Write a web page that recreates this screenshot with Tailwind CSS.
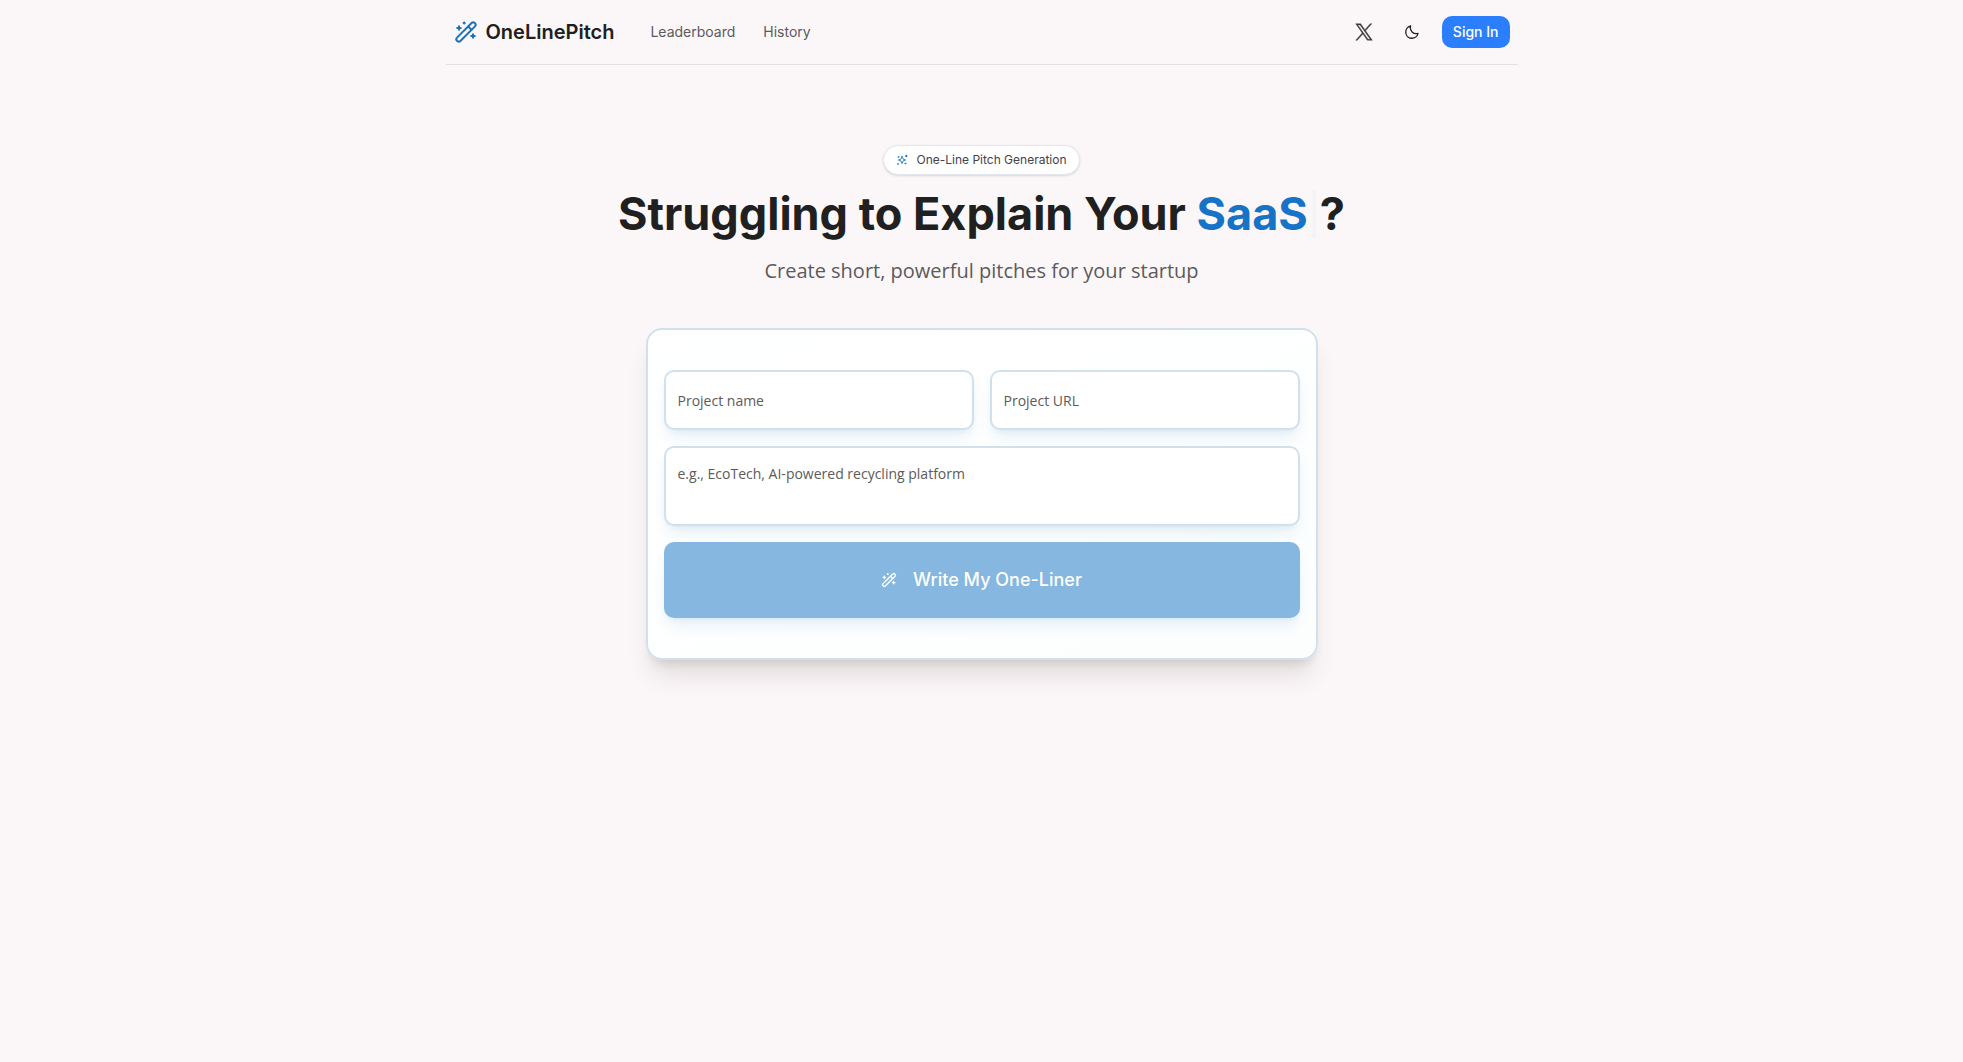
<!DOCTYPE html>
<html lang="en">
<head>
<meta charset="utf-8">
<meta name="viewport" content="width=device-width, initial-scale=1">
<title>OneLinePitch</title>
<script src="https://cdn.jsdelivr.net/npm/@tailwindcss/browser@4"></script>
</head>
<body class="min-h-screen bg-[#fbf7f8] font-['Inter',sans-serif] text-[#202020]">
<svg class="hidden" aria-hidden="true">
  <symbol id="wand" viewBox="0 0 24 24" fill="none" stroke="currentColor" stroke-linecap="round" stroke-linejoin="round">
    <rect x="-0.5" y="9.600" width="25" height="4.800" rx="2.200" transform="rotate(-45 12 12)"/>
    <path d="M14.200 6.500l3.300 3.300M5 6.200v3.600M3.200 8h3.600M19 14.200v3.600M17.200 16h3.600M10.200 2.400v1.200M9.600 3h1.200"/>
  </symbol>
</svg>
<header class="mx-auto flex h-[65px] max-w-[1072px] items-center justify-between border-b border-[#e4e1e3] px-2">
  <div class="flex items-center gap-9">
    <a href="#" class="flex items-center gap-2 text-xl font-semibold">
      <svg class="size-6 text-[#1874bd]" stroke-width="2" aria-hidden="true"><use href="#wand"/></svg>
      OneLinePitch
    </a>
    <nav class="flex gap-7 text-sm text-[#5c5a5c]">
      <a href="#">Leaderboard</a>
      <a href="#">History</a>
    </nav>
  </div>
  <div class="flex items-center gap-3">
    <a href="#" aria-label="X" class="flex size-9 items-center justify-center text-[#3c3c3c]">
      <svg class="size-[18px]" viewBox="0 0 24 24" fill="currentColor" stroke="currentColor" stroke-width=".6" aria-hidden="true"><path d="M14.100 10.300 22.300 1h-2l-7.100 8.100L7.600 1H1l8.600 12.300L1 23h2l7.500-8.500 6 8.500H23.100zm-2.700 3-.9-1.200L3.700 2.500h3l5.500 7.800.9 1.200 7.200 10.100h-3z"/></svg>
    </a>
    <button type="button" aria-label="Toggle theme" class="flex size-9 items-center justify-center">
      <svg class="size-4" viewBox="0 0 24 24" fill="none" stroke="currentColor" stroke-width="2" stroke-linejoin="round" aria-hidden="true"><path d="M21 14.080A8.700 8.700 0 0 1 18.250 14.500 8.950 8.950 0 0 1 9.500 5.750c0-1 .15-1.900.4-2.750A9.300 9.300 0 1 0 21 14.080z"/></svg>
    </button>
    <button type="button" class="h-8 rounded-[10px] bg-[#2b7fff] px-[11px] text-sm font-medium text-white">Sign In</button>
  </div>
</header>
<main class="flex flex-col items-center px-4 pt-20">
  <div class="flex h-[30px] items-center gap-2 rounded-full border border-[#e3e6ec] bg-white px-3 text-xs text-[#41424d] shadow-sm">
    <svg class="size-3 text-[#1874bd]" viewBox="0 0 24 24" fill="none" stroke="currentColor" stroke-width="2" stroke-linecap="round" stroke-linejoin="round" aria-hidden="true"><path d="M12 5c1 4.500 2.500 6 7 7-4.500 1-6 2.500-7 7-1-4.500-2.500-6-7-7 4.500-1 6-2.500 7-7z"/><path stroke-width="3" d="M20.500 3v2M19.500 4h2M4.500 6h1M3.500 20h1M18.500 19h1"/></svg>
    One-Line Pitch Generation
  </div>
  <h1 class="mt-2 flex items-center text-[45px] leading-[62px] font-bold">
    <span class="whitespace-pre">Struggling to Explain Your </span>
    <span class="text-[#1673c6]">SaaS</span>
    <span class="mx-1 h-12 w-1 bg-[#f4f3f6]"></span>
    <span>?</span>
  </h1>
  <p class="mt-3 font-['Open_Sans',sans-serif] text-xl text-[#5c5a5c]">Create short, powerful pitches for your startup</p>
  <form class="mt-[43px] grid w-full max-w-2xl grid-cols-2 gap-4 rounded-2xl border-2 border-[#d0e1ed] bg-linear-to-br from-white to-[#fcfefe] px-4 py-10 shadow-[0_20px_25px_-5px_rgba(60,30,30,0.12),0_8px_10px_-6px_rgba(60,30,30,0.14)]">
    <input type="text" aria-label="Project name" placeholder="Project name" class="h-[60px] min-w-0 rounded-[10px] border-2 border-[#d0e1ed] bg-white px-3 font-['Open_Sans',sans-serif] text-sm shadow-lg shadow-[#1874bd]/10 placeholder:text-[#5c5a5c]">
    <input type="url" aria-label="Project URL" placeholder="Project URL" class="h-[60px] min-w-0 rounded-[10px] border-2 border-[#d0e1ed] bg-white px-3 font-['Open_Sans',sans-serif] text-sm shadow-lg shadow-[#1874bd]/10 placeholder:text-[#5c5a5c]">
    <textarea aria-label="Project description" placeholder="e.g., EcoTech, AI-powered recycling platform" class="col-span-2 h-20 resize-none rounded-[10px] border-2 border-[#d0e1ed] bg-white px-3 py-4 font-['Open_Sans',sans-serif] text-sm shadow-lg shadow-[#1874bd]/10 placeholder:text-[#5c5a5c]"></textarea>
    <button type="submit" class="col-span-2 flex h-[76px] items-center justify-center gap-4 rounded-[10px] bg-[#85b7e0] text-lg font-medium text-white shadow-lg shadow-[#1874bd]/10">
      <svg class="size-4" stroke-width="2" aria-hidden="true"><use href="#wand"/></svg>
      Write My One-Liner
    </button>
  </form>
</main>
</body>
</html>
